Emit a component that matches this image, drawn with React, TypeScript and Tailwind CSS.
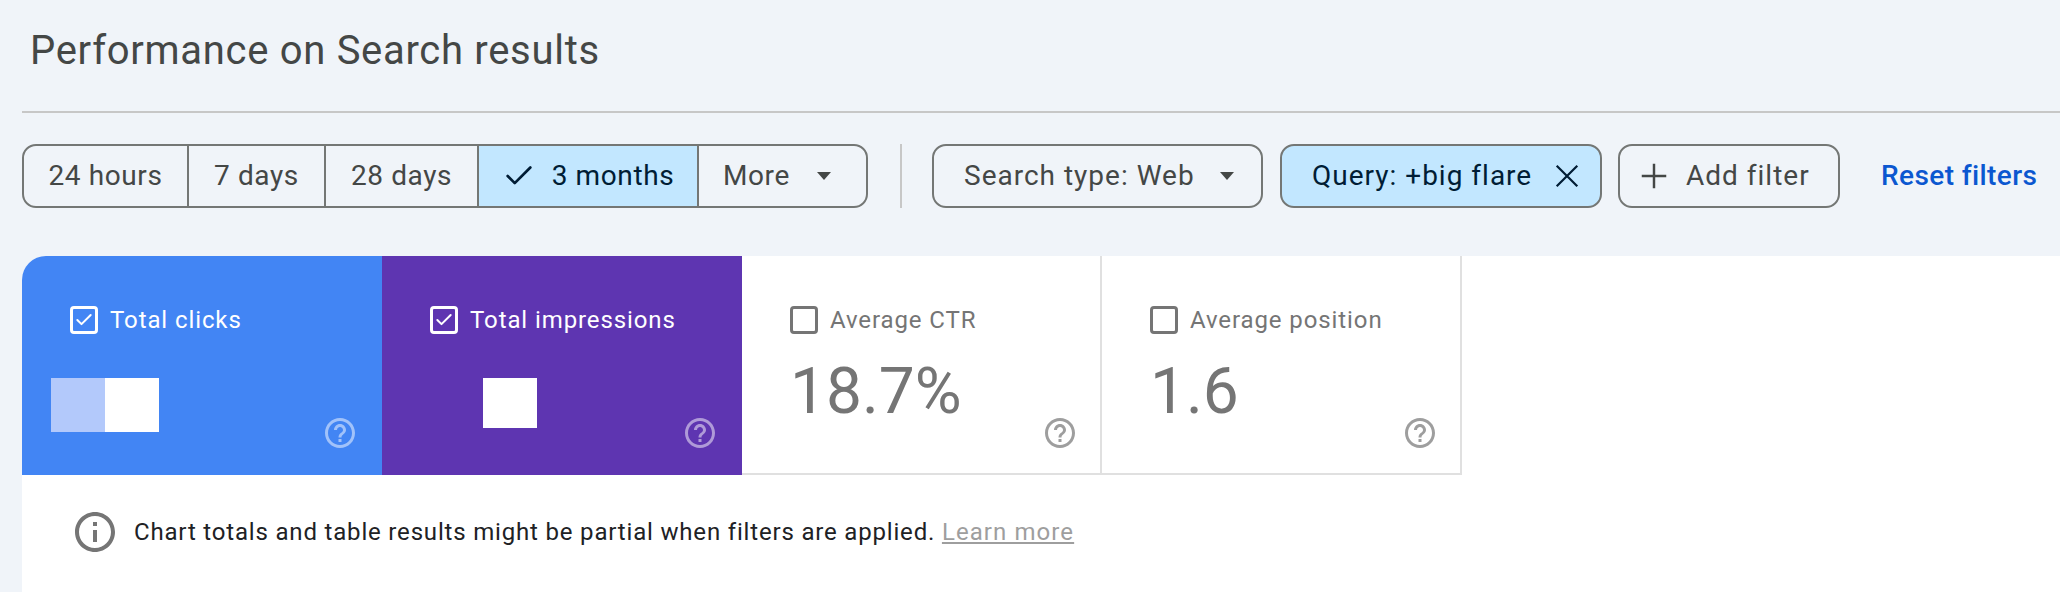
import { Check } from 'lucide-react';
import React from 'react';

const helpPath =
  'M11 18h2v-2h-2v2zm1-16C6.48 2 2 6.48 2 12s4.48 10 10 10 10-4.48 10-10S17.52 2 12 2zm0 18c-4.41 0-8-3.59-8-8s3.59-8 8-8 8 3.59 8 8-3.59 8-8 8zm0-14c-2.21 0-4 1.79-4 4h2c0-1.1.9-2 2-2s2 .9 2 2c0 2-3 1.75-3 5h2c0-2.25 3-2.5 3-5 0-2.21-1.79-4-4-4z';
const infoPath =
  'M11 7h2v2h-2zm0 4h2v6h-2zm1-9C6.48 2 2 6.48 2 12s4.48 10 10 10 10-4.48 10-10S17.52 2 12 2zm0 18c-4.41 0-8-3.59-8-8s3.59-8 8-8 8 3.59 8 8-3.59 8-8 8z';
const addPath = 'M19 12.7h-6.3V19h-1.4v-6.3H5v-1.4h6.3V5h1.4v6.3H19v1.4z';

function Caret({ className }: { className: string }) {
  return (
    <svg viewBox="0 0 14 8" className={className} fill="currentColor">
      <path d="M0 0h14L7 8z" />
    </svg>
  );
}

function Checkbox({ checked, className }: { checked: boolean; className: string }) {
  return (
    <span className={`flex h-[28px] w-[28px] shrink-0 items-center justify-center rounded-[4px] border-[3px] ${className}`}>
      {checked && <Check className="h-[20px] w-[20px]" strokeWidth={2.4} />}
    </span>
  );
}

function Help({ className }: { className: string }) {
  return (
    <svg viewBox="0 0 24 24" className={`h-[36px] w-[36px] shrink-0 ${className}`} fill="currentColor">
      <path d={helpPath} />
    </svg>
  );
}

function MetricCard({
  label,
  value,
  checked,
  cardClass,
  helpClass,
  boxClass,
  children,
}: {
  label: string;
  value?: string;
  checked: boolean;
  cardClass: string;
  helpClass: string;
  boxClass: string;
  children?: React.ReactNode;
}) {
  return (
    <div className={`flex h-[219px] w-[360px] shrink-0 flex-col pl-[48px] pt-[50px] ${cardClass}`}>
      <div className="flex h-[28px] items-center gap-[12px] text-[24px] tracking-[0.9px]">
        <Checkbox checked={checked} className={boxClass} />
        <span>{label}</span>
      </div>
      <div className="flex flex-1 justify-between">
        <div className="min-w-0">
          {value && <div className="mt-[20px] text-[64px] leading-[75px]">{value}</div>}
          {children}
        </div>
        <Help className={`mt-[81px] ${helpClass}`} />
      </div>
    </div>
  );
}

export default function App() {
  return (
    <div className="h-[592px] w-[2060px] overflow-hidden bg-[#f0f4f9] font-['Roboto',sans-serif]">
      <div className="ml-[22px]">
        <h1 className="h-[111px] pl-[8px] pt-[27px] text-[40px] font-normal leading-[48px] tracking-[0.7px] text-[#444746]">
          Performance on Search results
        </h1>
        <div className="h-[2px] bg-[#c7c7c7]" />

        {/* Filters */}
        <div className="mt-[31px] flex h-[64px] items-center text-[28px] text-[#444746]">
          <div className="flex h-[64px] w-[846px] overflow-hidden rounded-[14px] border-2 border-[#747775] tracking-[0.6px]">
            <div className="flex w-[165px] items-center justify-center border-r-2 border-[#747775]">24 hours</div>
            <div className="flex w-[137px] items-center justify-center border-r-2 border-[#747775]">7 days</div>
            <div className="flex w-[153px] items-center justify-center border-r-2 border-[#747775]">28 days</div>
            <div className="flex w-[220px] items-center justify-center gap-[16px] border-r-2 border-[#747775] bg-[#c2e7ff] text-[#001d35]">
              <Check className="h-[34px] w-[34px]" strokeWidth={1.9} />
              3 months
            </div>
            <div className="flex flex-1 items-center pl-[24px]">
              More
              <Caret className="ml-[27px] h-[8px] w-[14px]" />
            </div>
          </div>

          <div className="ml-[32px] h-[64px] w-[2px] bg-[#c7c7c7]" />

          <div className="ml-[30px] flex h-[64px] w-[331px] items-center rounded-[14px] border-2 border-[#747775] pl-[30px] tracking-[1px]">
            Search type: Web
            <Caret className="ml-[25px] h-[8px] w-[14px]" />
          </div>
          <div className="ml-[17px] flex h-[64px] w-[322px] items-center rounded-[14px] border-2 border-[#747775] bg-[#c2e7ff] pl-[30px] tracking-[1px] text-[#001d35]">
            Query: +big flare
            <svg viewBox="0 0 24 24" className="ml-[16px] h-[38px] w-[38px]" fill="none" stroke="currentColor" strokeWidth={1.4}>
              <path d="M5.5 5.5l13 13M18.5 5.5l-13 13" />
            </svg>
          </div>
          <div className="ml-[16px] flex h-[64px] w-[222px] items-center rounded-[14px] border-2 border-[#747775] pl-[13px] tracking-[1px]">
            <svg viewBox="0 0 24 24" className="h-[42px] w-[42px]" fill="currentColor">
              <path d={addPath} />
            </svg>
            <span className="ml-[11px]">Add filter</span>
          </div>
          <a className="ml-[41px] font-medium tracking-[0.4px] text-[#0b57d0]">Reset filters</a>
        </div>

        {/* Panel */}
        <div className="mt-[48px] h-[336px] rounded-tl-[24px] bg-white">
          <div className="flex">
            <MetricCard
              label="Total clicks"
              checked
              cardClass="rounded-tl-[24px] bg-[#4285f4] pr-[24px] text-white"
              boxClass="border-white"
              helpClass="text-white/50"
            >
              <div className="-ml-[19px] mt-[44px] flex h-[54px]">
                <div className="w-[54px] bg-[#b3c9fb]" />
                <div className="w-[54px] bg-white" />
              </div>
            </MetricCard>
            <MetricCard
              label="Total impressions"
              checked
              cardClass="bg-[#5e35b1] pr-[24px] text-white"
              boxClass="border-white"
              helpClass="text-white/50"
            >
              <div className="ml-[53px] mt-[44px] h-[50px] w-[54px] bg-white" />
            </MetricCard>
            <MetricCard
              label="Average CTR"
              value="18.7%"
              checked={false}
              cardClass="border-b-2 border-r-2 border-[#e0e0e0] pr-[22px] text-[#757575]"
              boxClass="border-[#757575]"
              helpClass="text-[#9e9e9e]"
            />
            <MetricCard
              label="Average position"
              value="1.6"
              checked={false}
              cardClass="border-b-2 border-r-2 border-[#e0e0e0] pr-[22px] text-[#757575]"
              boxClass="border-[#757575]"
              helpClass="text-[#9e9e9e]"
            />
          </div>
          <div className="ml-[49px] mt-[33px] flex items-center gap-[15px] text-[24px] tracking-[0.82px] text-[#202124]">
            <svg viewBox="0 0 24 24" className="h-[48px] w-[48px] shrink-0 text-[#757575]" fill="currentColor">
              <path d={infoPath} />
            </svg>
            <p>
              Chart totals and table results might be partial when filters are applied.{' '}
              <a className="tracking-[1.08px] text-[#9e9e9e] underline">Learn more</a>
            </p>
          </div>
        </div>
      </div>
    </div>
  );
}
